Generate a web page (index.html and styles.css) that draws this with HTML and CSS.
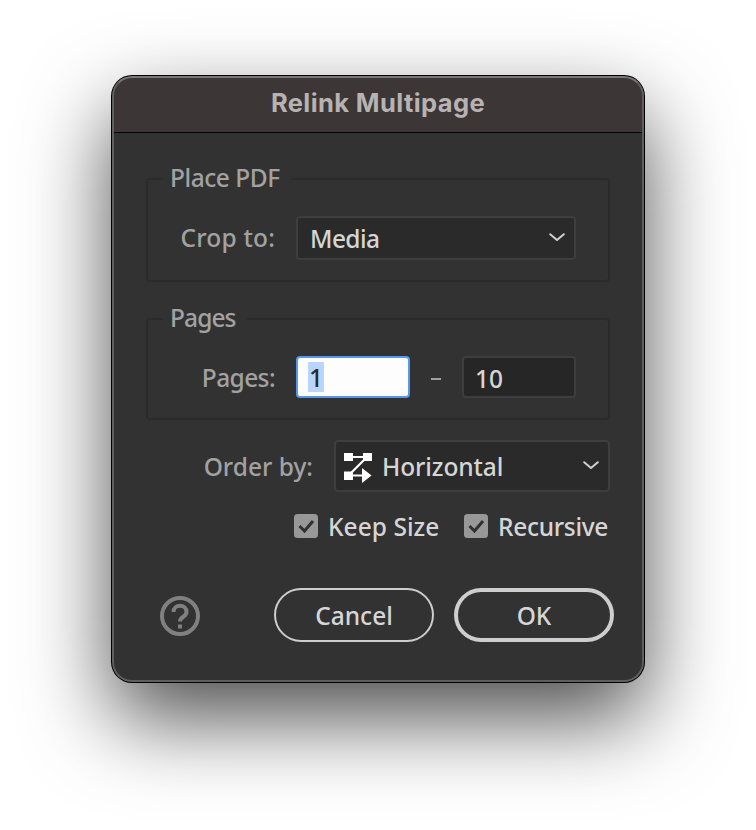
FILE: index.html
```html
<!DOCTYPE html>
<html lang="en">
<head>
<meta charset="utf-8">
<title>Relink Multipage</title>
<link rel="stylesheet" href="styles.css">
</head>
<body>
<main class="dialog">
  <header class="titlebar"><h1 class="title">Relink Multipage</h1></header>
  <section class="group group-pdf">
    <h2 class="legend"><span class="t t-place">Place PDF</span></h2>
    <div class="row row-crop">
      <span class="label"><span class="t t-crop">Crop to:</span></span>
      <div class="select"><span class="t t-media">Media</span>
        <svg class="chevron" viewBox="0 0 16 9"><path d="M1.2 1.2 8 7l6.8-5.8"/></svg>
      </div>
    </div>
  </section>
  <section class="group group-pages">
    <h2 class="legend"><span class="t t-pages">Pages</span></h2>
    <div class="row row-pages">
      <span class="label"><span class="t t-pagesl">Pages:</span></span>
      <div class="field focused"><span class="t selected">1</span></div>
      <span class="dash"></span>
      <div class="field"><span class="t t-ten">10</span></div>
    </div>
  </section>
  <div class="row row-order">
    <span class="label"><span class="t t-order">Order by:</span></span>
    <div class="select select-order">
      <svg class="order-icon" viewBox="0 0 30 32"><path class="line" d="M6 6h18M23 7 7 23M6 24.5h16"/><path class="solid" d="M1 2h9v8H1zM20 2h9v8h-9zM1 20.500h9v8.500H1zM19 17l9.500 7.500L19 32z"/></svg>
      <span class="t t-horizontal">Horizontal</span>
      <svg class="chevron" viewBox="0 0 16 9"><path d="M1.2 1.2 8 7l6.8-5.8"/></svg>
    </div>
  </div>
  <div class="checks">
    <span class="check"><svg class="box" viewBox="0 0 24 24"><rect width="24" height="24" rx="3.5"/><path d="m5.500 12 5 5L19 7"/></svg><span class="t t-keep">Keep Size</span></span>
    <span class="check"><svg class="box" viewBox="0 0 24 24"><rect width="24" height="24" rx="3.5"/><path d="m5.500 12 5 5L19 7"/></svg><span class="t t-rec">Recursive</span></span>
  </div>
  <footer class="footer">
    <svg class="help" viewBox="0 0 40 40"><circle cx="20" cy="20" r="18"/><path d="M13.5 16c0-8.500 13-8.500 13 0 0 5-6.500 4.500-6.500 9.500"/><path d="M20 28.500v4"/></svg>
    <div class="button"><span class="t t-cancel">Cancel</span></div>
    <div class="button primary"><span class="t t-ok">OK</span></div>
  </footer>
</main>
</body>
</html>
```
FILE: styles.css
```css
* { box-sizing: border-box; }
body { margin: 0; height: 830px; background: #fff; overflow: hidden; font: 500 24.5px/30px "Noto Sans", sans-serif; color: #d6d6d6; }
.dialog { width: 532px; height: 606px; margin: 76px auto 0; position: relative; border-radius: 20px; background: #323232; box-shadow: 0 0 0 1px #000, 0 36px 86px rgba(0,0,0,.7); overflow: hidden; }
.dialog::after { content: ""; position: absolute; inset: 0; border: 2px solid #5f5f5f; border-top-color: #787776; border-radius: 20px; pointer-events: none; }
.titlebar { height: 57px; background: #3c3736; border-bottom: 1px solid #000; text-align: center; }
.title { margin: 0; padding-top: 12px; font: 700 25.5px/30px Inter, sans-serif; letter-spacing: .4px; color: #b8b3b2; }
.t { white-space: nowrap; display: inline-block; }
.group { margin: 0 34px; border: 2px solid #2b2b2b; border-radius: 4px; }
.group-pdf { margin-top: 45px; height: 104px; }
.group-pages { margin-top: 36px; height: 102px; }
.legend { margin: -17px 0 0 15px; height: 30px; width: max-content; padding: 0 11px 0 7px; background: #323232; font: inherit; color: #a2a2a2; }
.t-place { letter-spacing: -.45px; }
.t-pages { letter-spacing: -.9px; }
.row { display: flex; }
.label { text-align: right; color: #a2a2a2; }
.row-crop, .row-pages { margin-top: 23px; }
.row-crop .label, .row-pages .label { width: 127px; margin-right: 21px; padding-top: 7px; }
.t-crop { letter-spacing: .2px; }
.t-pagesl { letter-spacing: -.6px; }
.select { width: 280px; height: 44px; border: 2px solid #3e3e3e; border-radius: 4px; background: #2a2a2a; display: flex; align-items: center; padding: 2px 9px 0 12px; }
.t-media { letter-spacing: -.6px; }
.chevron { width: 16px; height: 9px; margin-left: auto; margin-top: -4px; fill: none; stroke: #d0d0d0; stroke-width: 2; stroke-linecap: round; stroke-linejoin: round; }
.field { width: 114px; height: 42px; border: 2px solid #3e3e3e; border-radius: 4px; background: #262626; padding: 4px 0 0 11px; }
.field .t { padding-top: 1px; }
.field .t-ten { padding-top: 2px; }
.focused { background: #fdfdfd; border-color: #5598ec; padding-left: 10px; }
.field .selected { height: 30px; padding-top: 2px; line-height: 28px; background: #b8d6fb; color: #2a2a2a; width: 16px; text-align: center; }
.dash { width: 10px; height: 2px; margin: 22px 21px 0; background: #a0a0a0; }
.row-order { margin: 20px 34px 0; height: 52px; }
.row-order .label { width: 167px; margin-right: 21px; padding-top: 12px; }
.select-order { width: 276px; height: 52px; padding: 2px 9px 0 7px; }
.select-order .chevron { margin-top: -3px; }
.t-horizontal { letter-spacing: -.1px; }
.order-icon { width: 30px; height: 32px; margin-right: 9px; }
.order-icon .line { fill: none; stroke: #fff; stroke-width: 2.2; }
.order-icon .solid { fill: #fff; }
.checks { display: flex; margin: 22px 0 0 182px; height: 24px; }
.check { display: flex; align-items: center; gap: 10px; width: 170px; }
.check .t { padding-top: 2px; letter-spacing: .05px; }
.check .t-rec { letter-spacing: -.3px; }
.box { width: 24px; height: 24px; fill: #989898; }
.box path { fill: none; stroke: #303030; stroke-width: 3; }
.footer { display: flex; margin: 50px 0 0 48px; height: 54px; align-items: center; }
.help { width: 40px; height: 40px; margin-top: 2px; margin-right: 74px; fill: none; stroke: #808080; stroke-width: 4; }
.button { width: 160px; height: 54px; border: 2px solid #cecece; border-radius: 27px; display: flex; align-items: center; justify-content: center; margin-right: 20px; padding-top: 2px; }
.primary { border-width: 4px; margin: 0; }
body { display: flow-root; }
```
